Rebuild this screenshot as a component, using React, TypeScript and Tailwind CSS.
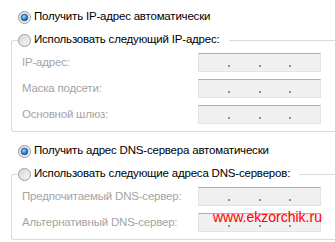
import React from "react";

function Radio({ checked }: { checked?: boolean }) {
  return (
    <svg width="13" height="13" viewBox="0 0 13 13" className="shrink-0">
      <defs>
        <linearGradient id="rbg" x1="0" y1="0" x2="1" y2="1">
          <stop offset="0" stopColor="#d0d0d0" />
          <stop offset="1" stopColor="#ffffff" />
        </linearGradient>
        <radialGradient id="rdot" cx="0.4" cy="0.35" r="0.7">
          <stop offset="0" stopColor="#8fe0ff" />
          <stop offset="0.6" stopColor="#2a86d8" />
          <stop offset="1" stopColor="#123e7a" />
        </radialGradient>
      </defs>
      <circle cx="6.5" cy="6.5" r="6" fill="url(#rbg)" stroke="#9a9a9a" />
      <circle cx="6.5" cy="6.5" r="4.5" fill="none" stroke="#e8e8e8" />
      {checked && <circle cx="6.5" cy="6.5" r="3.3" fill="url(#rdot)" stroke="#2b4f7f" strokeWidth="0.8" />}
    </svg>
  );
}

function IpBox({ children }: { children?: React.ReactNode }) {
  return (
    <div className="relative ml-auto mr-[14px] flex h-[19px] w-[123px] shrink-0 items-end border border-[#dfe3e8] border-t-[#abadb3] bg-[#f0f0f0]">
      <div className="mb-[4px] grid w-full grid-cols-4">
        <span />
        <span className="-ml-[1px] h-[2px] w-[2px] bg-[#8a8ab0]" />
        <span className="-ml-[1px] h-[2px] w-[2px] bg-[#8a8ab0]" />
        <span className="-ml-[1px] h-[2px] w-[2px] bg-[#8a8ab0]" />
      </div>
      {children}
    </div>
  );
}

function Row({ label, children }: { label: string; children?: React.ReactNode }) {
  return (
    <div className="flex items-center">
      <span className="whitespace-nowrap text-[#a4a4a4]">{label}</span>
      <IpBox>{children}</IpBox>
    </div>
  );
}

function Section({ auto, manual, rows, last }: { auto: string; manual: string; rows: string[]; last?: boolean }) {
  return (
    <div>
      <label className="ml-[18px] flex h-[16px] items-center gap-[3px] whitespace-nowrap text-black">
        <Radio checked />
        {auto}
      </label>
      <fieldset className="ml-[11px] mt-[7px] rounded-l-[3px] border border-r-0 border-[#d5dde3] pb-[7px] pl-[10px]">
        <legend className="-ml-[4px] flex h-[16px] items-center gap-[3px] whitespace-nowrap pr-[9px] text-black">
          <Radio />
          {manual}
        </legend>
        <div className="flex flex-col gap-[7px] pt-[5px]">
          {rows.map((r, i) => (
            <Row key={r} label={r}>
              {last && i === rows.length - 1 && (
                <span className="absolute left-[14px] top-[-4px] text-[14px] leading-none tracking-normal text-[#ff0000]">
                  www.ekzorchik.ru
                </span>
              )}
            </Row>
          ))}
        </div>
      </fieldset>
    </div>
  );
}

export default function App() {
  return (
    <div className="h-[242px] w-[335px] overflow-hidden bg-white pt-[9px] font-['Liberation_Sans',Arial,sans-serif] text-[11.5px] leading-none tracking-[-0.2px]">
      <Section
        auto="Получить IP-адрес автоматически"
        manual="Использовать следующий IP-адрес:"
        rows={["IP-адрес:", "Маска подсети:", "Основной шлюз:"]}
      />
      <div className="mt-[11px]">
        <Section
          auto="Получить адрес DNS-сервера автоматически"
          manual="Использовать следующие адреса DNS-серверов:"
          rows={["Предпочитаемый DNS-сервер:", "Альтернативный DNS-сервер:"]}
          last
        />
      </div>
    </div>
  );
}
